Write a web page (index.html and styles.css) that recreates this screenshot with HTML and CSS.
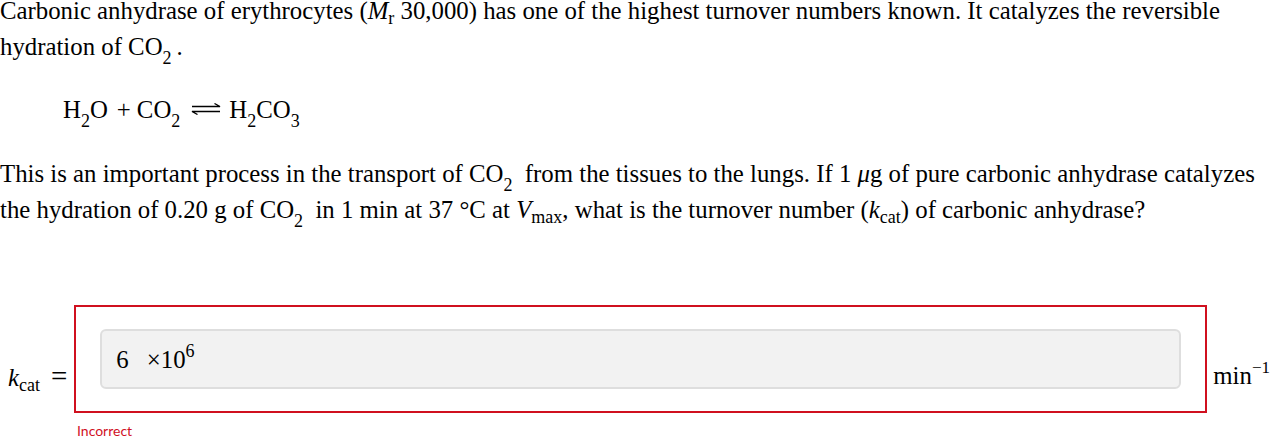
FILE: index.html
```html
<!DOCTYPE html>
<html>
<head>
<meta charset="utf-8">
<link rel="stylesheet" href="styles.css">
</head>
<body>
<div class="page">
  <p class="para first">Carbonic anhydrase of erythrocytes (<i>M</i><sub class="sm">r</sub> 30,000) has one of the highest turnover numbers known. It catalyzes the reversible hydration of CO<sub>2</sub>&thinsp;.</p>
  <div class="eq">H<sub>2</sub>O<span class="op">+</span>CO<sub>2</sub><svg class="arrow" width="32" height="12" viewBox="0 0 32 12"><path d="M2 3.5H30L24.5 0.5" fill="none" stroke="#000" stroke-width="1.3"/><path d="M30 8.5H2L7.5 11.5" fill="none" stroke="#000" stroke-width="1.3"/></svg>H<sub>2</sub>CO<sub>3</sub></div>
  <p class="para">This is an important process in the transport of CO<sub>2</sub>&nbsp; from the tissues to the lungs. If 1 <i>μ</i>g of pure carbonic anhydrase catalyzes the hydration of 0.20 g of CO<sub>2</sub>&nbsp; in 1 min at 37 °C at <i>V</i><sub class="sm">max</sub>, what is the turnover number (<i>k</i><sub class="sm">cat</sub>) of carbonic anhydrase?</p>

  <div class="answer">
    <div class="row">
      <div class="label"><i>k</i><sub class="sm">cat</sub><span class="eqsign">=</span></div>
      <div class="box">
        <div class="field"><span>6</span><span class="times">×10<sup>6</sup></span></div>
      </div>
      <div class="unit">min<sup>−1</sup></div>
    </div>
    <div class="status">Incorrect</div>
  </div>
</div>
</body>
</html>
```

FILE: styles.css
```css
html, body {
  margin: 0;
  padding: 0;
  background: #fff;
}
body {
  font-family: "Liberation Serif", "Times New Roman", serif;
  font-size: 24.8px;
  color: #000;
}
.page {
  padding: 0;
}
.para {
  margin: 0;
  line-height: 36px;
}
.para.first {
  margin-top: -7px;
}
sub {
  font-size: 18px;
  line-height: 0;
  vertical-align: -9px;
}
sub.sm {
  vertical-align: -5px;
}
.eq {
  line-height: 36px;
  margin: 27px 0 28px 63px;
}
.op {
  margin: 0 6px 0 9px;
}
.arrow {
  vertical-align: 3px;
  margin: 0 7px 0 10px;
}
.answer {
  margin-top: 77px;
}
.row {
  display: flex;
  align-items: stretch;
  padding-left: 8px;
  padding-right: 3px;
}
.label {
  align-self: flex-end;
  margin-bottom: 23px;
  line-height: 25px;
  white-space: nowrap;
}
.eqsign {
  font-size: 29px;
  line-height: 0;
  margin-left: 11px;
  margin-right: 7px;
}
.box {
  flex: 1;
  border: 2px solid #d0101f;
  padding: 22px 24px 22px 24px;
}
.field {
  height: 56px;
  background: #f2f2f2;
  border: 2px solid #dedede;
  border-radius: 6px;
  padding: 0 14px;
  display: flex;
  align-items: center;
  line-height: 25px;
  box-sizing: content-box;
}
.times {
  margin-left: 18px;
}
.times sup {
  font-size: 18px;
  line-height: 0;
  vertical-align: 11px;
}
.unit {
  align-self: flex-end;
  margin-bottom: 25px;
  margin-left: 6px;
  line-height: 25px;
  white-space: nowrap;
}
.unit sup {
  font-size: 17px;
  line-height: 0;
  vertical-align: 11px;
}
.status {
  font-family: Lato, "Open Sans", sans-serif;
  font-size: 14px;
  color: #d0101f;
  margin: 9px 0 0 77px;
}
```
